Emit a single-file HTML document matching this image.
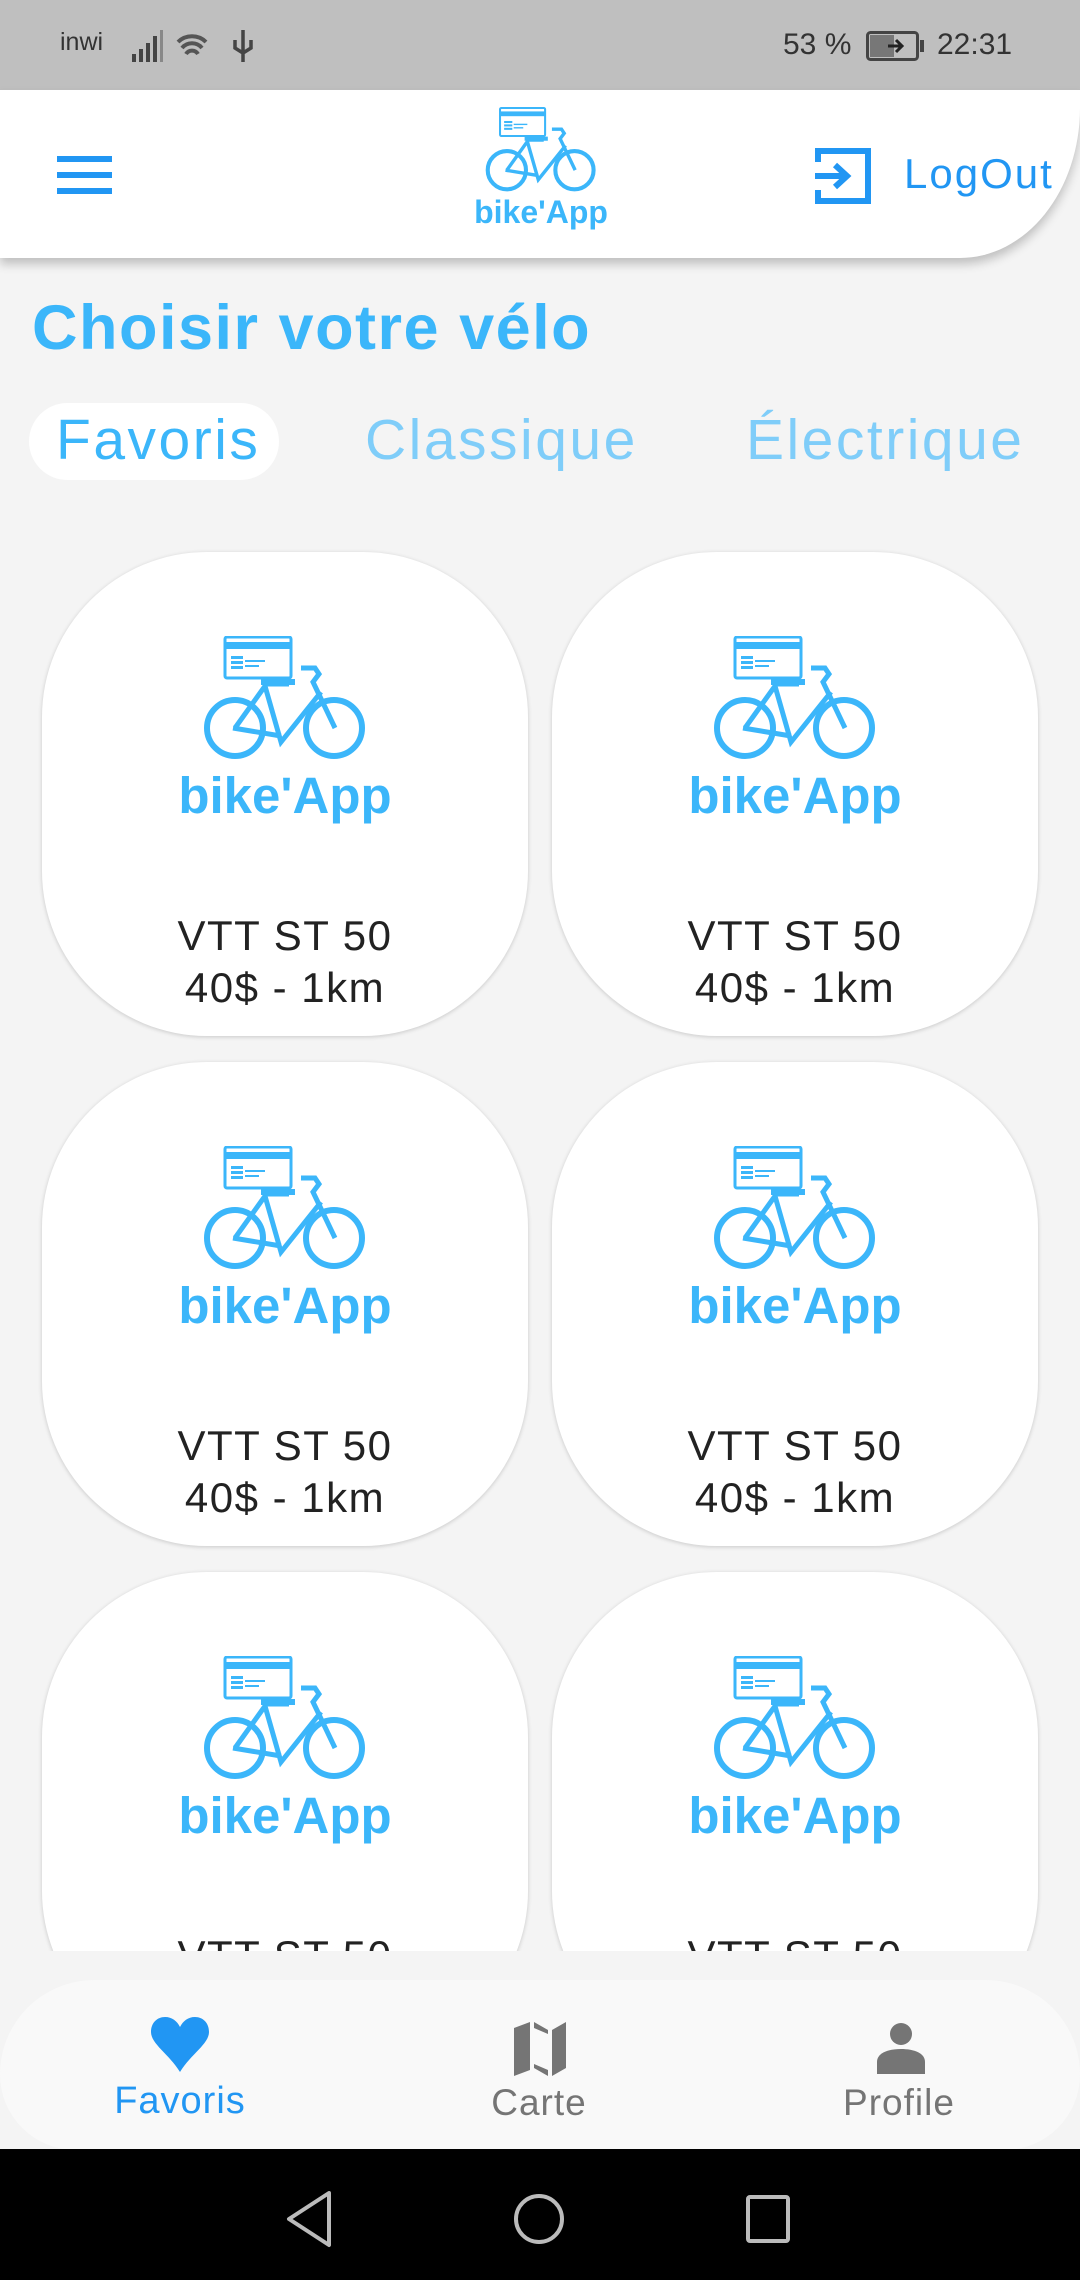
<!DOCTYPE html>
<html><head><meta charset="utf-8"><style>
*{margin:0;padding:0;box-sizing:border-box}
body{width:1080px;height:2280px;background:#f4f4f4;font-family:"Liberation Sans",sans-serif;position:relative;overflow:hidden}
.abs{position:absolute}
.status{left:0;top:0;width:1080px;height:90px;background:#bfbfbf;color:#333;font-size:30px}
.header{left:0;top:90px;width:1080px;height:168px;background:#fff;border-bottom-right-radius:120px 150px;box-shadow:0 6px 10px rgba(0,0,0,.22);z-index:2}
.card{width:486px;height:484px;background:#fff;border-radius:165px;box-shadow:0 1px 4px rgba(0,0,0,.18)}
.card svg{position:absolute;left:161px;top:84px}
.card .brand{position:absolute;left:0;width:100%;top:214px;text-align:center;color:#3bb6fa;font-weight:bold;font-size:51px}
.card .t{position:absolute;left:0;width:100%;text-align:center;color:#222;font-size:42px;letter-spacing:1.5px}
.nav{left:0;top:1980px;width:1080px;height:170px;background:#f9f9f9;border-radius:100px 100px 0 0/100px 100px 0 0;border-bottom-left-radius:80px;border-bottom-right-radius:80px}
.lbl{font-size:37px;color:#757575;text-align:center;width:200px;letter-spacing:1px}
.tab{font-size:57px;letter-spacing:2.5px}
</style></head><body>
<div class="abs status">
 <div class="abs" style="left:60px;top:28px;font-size:25px">inwi</div>
 <svg class="abs" style="left:130px;top:28px" width="130" height="36" viewBox="0 0 130 36">
  <g fill="#444"><rect x="2" y="26" width="4" height="8"/><rect x="9" y="21" width="4" height="13"/><rect x="16" y="15" width="4" height="19"/><rect x="23" y="8" width="4" height="26"/><rect x="30" y="2" width="3" height="32" fill="#888"/></g>
  <path d="M48 14a20 20 0 0 1 28 0M52 20a13 13 0 0 1 20 0M56 26a7 7 0 0 1 12 0" stroke="#555" stroke-width="4" fill="none"/>
  <path d="M113 2v32M105 12v8l8 5 8-5v-8" stroke="#444" stroke-width="3.5" fill="none"/>
 </svg>
 <div class="abs" style="left:783px;top:28px">53 %</div>
 <svg class="abs" style="left:866px;top:31px" width="62" height="30" viewBox="0 0 62 30"><rect x="1.5" y="1.5" width="50" height="27" rx="3" fill="none" stroke="#444" stroke-width="3"/><rect x="4" y="4" width="24" height="22" fill="#777"/><rect x="54" y="9" width="4" height="12" fill="#444"/><path d="M22 15h14M30 9l6 6-6 6" stroke="#222" stroke-width="3" fill="none"/></svg>
 <div class="abs" style="left:937px;top:28px">22:31</div>
</div>
<div class="abs header">
 <div class="abs" style="left:57px;top:66px;width:55px;height:6px;background:#2196f3"></div>
 <div class="abs" style="left:57px;top:82px;width:55px;height:6px;background:#2196f3"></div>
 <div class="abs" style="left:57px;top:98px;width:55px;height:6px;background:#2196f3"></div>
 <svg class="abs" style="left:485px;top:17px" width="112" height="86" viewBox="0 0 164 125"><use href="#bike"/></svg>
 <div class="abs" style="left:441px;top:104px;width:200px;text-align:center;color:#3bb6fa;font-weight:bold;font-size:32px">bike'App</div>
 <svg class="abs" style="left:815px;top:58px" width="56" height="56" viewBox="0 0 56 56"><path d="M3 14V3h50v50H3V42" stroke="#2196f3" stroke-width="6" fill="none"/><path d="M0 28h30M20 17l12 11-12 11" stroke="#2196f3" stroke-width="6" fill="none"/></svg>
 <div class="abs" style="left:904px;top:60px;color:#2196f3;font-size:42px;letter-spacing:2px">LogOut</div>
</div>
<svg width="0" height="0" style="position:absolute"><defs><g id="bike" fill="none" stroke="#3bb6fa">
 <rect x="22" y="1" width="66" height="41" rx="2" stroke-width="3"/><rect x="22" y="6" width="66" height="7" fill="#3bb6fa" stroke="none"/>
 <g fill="#3bb6fa" stroke="none"><rect x="28" y="20" width="12" height="3"/><rect x="28" y="25" width="12" height="3"/><rect x="28" y="30" width="12" height="3"/><rect x="42" y="24" width="20" height="2"/><rect x="42" y="29" width="14" height="2"/></g>
 <circle cx="32" cy="92" r="28" stroke-width="6"/><circle cx="131" cy="92" r="28" stroke-width="6"/>
 <path d="M32 92l30-42 16 56 40-50M30 92l48 8M60 48h26M98 32h14l4 6-6 8 22 46" stroke-width="5"/>
 <path d="M58 46h34" stroke-width="6"/>
</g></defs></svg>
<div class="abs" style="left:32px;top:292px;color:#3bb6fa;font-weight:bold;font-size:63px;letter-spacing:1.5px">Choisir votre vélo</div>
<div class="abs" style="left:29px;top:403px;width:250px;height:77px;background:#fff;border-radius:40px"></div>
<div class="abs tab" style="left:56px;top:407px;color:#3bb6fa">Favoris</div>
<div class="abs tab" style="left:365px;top:407px;color:#7fcdf9">Classique</div>
<div class="abs tab" style="left:746px;top:407px;color:#7fcdf9">Électrique</div>
<div class="abs" style="left:0;top:540px;width:1080px;height:1411px;overflow:hidden">
 <div class="abs card" style="left:42px;top:12px"><svg width="164" height="125" viewBox="0 0 164 125"><use href="#bike"/></svg><div class="brand">bike'App</div><div class="t" style="top:360px">VTT ST 50</div><div class="t" style="top:412px">40$ - 1km</div></div>
 <div class="abs card" style="left:552px;top:12px"><svg width="164" height="125" viewBox="0 0 164 125"><use href="#bike"/></svg><div class="brand">bike'App</div><div class="t" style="top:360px">VTT ST 50</div><div class="t" style="top:412px">40$ - 1km</div></div>
 <div class="abs card" style="left:42px;top:522px"><svg width="164" height="125" viewBox="0 0 164 125"><use href="#bike"/></svg><div class="brand">bike'App</div><div class="t" style="top:360px">VTT ST 50</div><div class="t" style="top:412px">40$ - 1km</div></div>
 <div class="abs card" style="left:552px;top:522px"><svg width="164" height="125" viewBox="0 0 164 125"><use href="#bike"/></svg><div class="brand">bike'App</div><div class="t" style="top:360px">VTT ST 50</div><div class="t" style="top:412px">40$ - 1km</div></div>
 <div class="abs card" style="left:42px;top:1032px"><svg width="164" height="125" viewBox="0 0 164 125"><use href="#bike"/></svg><div class="brand">bike'App</div><div class="t" style="top:360px">VTT ST 50</div><div class="t" style="top:412px">40$ - 1km</div></div>
 <div class="abs card" style="left:552px;top:1032px"><svg width="164" height="125" viewBox="0 0 164 125"><use href="#bike"/></svg><div class="brand">bike'App</div><div class="t" style="top:360px">VTT ST 50</div><div class="t" style="top:412px">40$ - 1km</div></div>
</div>
<div class="abs nav">
 <svg class="abs" style="left:149px;top:36px" width="62" height="58" viewBox="0 0 62 58"><path d="M31 56C20 38 2 28 2 16 2 7 8 1 16 1c7 0 12 4 15 10C34 5 39 1 46 1c8 0 14 6 14 15 0 12-18 22-29 40z" fill="#2196f3"/></svg>
 <div class="abs lbl" style="left:80px;top:100px;color:#2196f3;font-size:38px">Favoris</div>
 <svg class="abs" style="left:512px;top:40px" width="56" height="56" viewBox="0 0 56 56"><path d="M2 8l16-6v48L2 56zM22 2l14 8v46l-14-8zM40 10L54 2v46l-14 8z" fill="#757575"/><path d="M22 8l14 6v36l-14-6z" fill="#f9f9f9"/></svg>
 <div class="abs lbl" style="left:439px;top:102px">Carte</div>
 <svg class="abs" style="left:876px;top:42px" width="50" height="52" viewBox="0 0 50 52"><circle cx="25" cy="12" r="11" fill="#757575"/><path d="M1 52V40c0-9 11-13 24-13s24 4 24 13v12z" fill="#757575"/></svg>
 <div class="abs lbl" style="left:799px;top:102px">Profile</div>
</div>
<div class="abs" style="left:0;top:2149px;width:1080px;height:131px;background:#000">
 <svg class="abs" style="left:285px;top:40px" width="520" height="60" viewBox="0 0 520 60"><path d="M44 4L4 30l40 26z" fill="none" stroke="#bbb" stroke-width="4" stroke-linejoin="round"/><circle cx="254" cy="30" r="23" fill="none" stroke="#bbb" stroke-width="4"/><rect x="463" y="8" width="40" height="44" rx="2" fill="none" stroke="#bbb" stroke-width="4"/></svg>
</div>
</body></html>
